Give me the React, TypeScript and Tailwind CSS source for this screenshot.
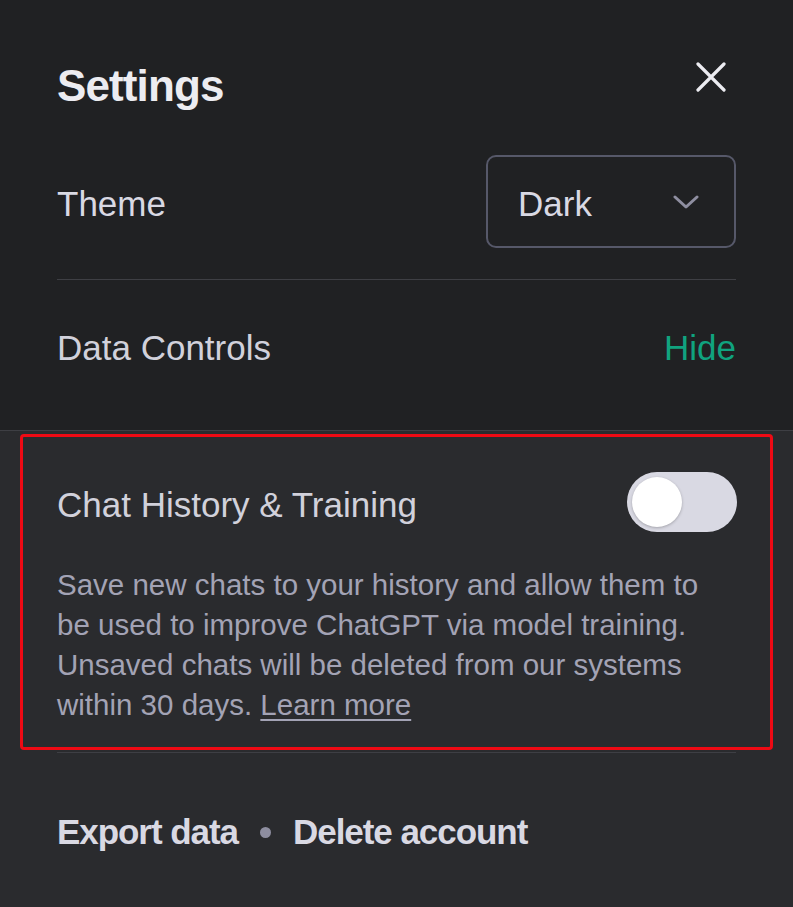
import { useState } from 'react';

const font = { fontFamily: '"Liberation Sans", Arial, sans-serif' };

function CloseIcon() {
  return (
    <svg width="30" height="30" viewBox="0 0 30 30" className="mr-[10px] mt-[2px]">
      <path d="M2 2L28 28M28 2L2 28" stroke="#ececf1" strokeWidth="3.2" strokeLinecap="round" />
    </svg>
  );
}

function Chevron() {
  return (
    <svg width="26" height="16" viewBox="0 0 26 16">
      <path d="M2 3L13 13L24 3" fill="none" stroke="#8e8ea0" strokeWidth="3" strokeLinecap="round" strokeLinejoin="round" />
    </svg>
  );
}

export default function App() {
  const [history, setHistory] = useState(false);

  return (
    <div className="flex min-h-[907px] w-full flex-col bg-[#202123]" style={font}>
      {/* top part */}
      <div className="flex flex-col px-[57px] pt-[60px]">
        <div className="flex h-[52px] items-start justify-between">
          <h1 className="text-[44px] font-bold leading-[52px] tracking-[-0.02em] text-[#ececf1]">Settings</h1>
          <CloseIcon />
        </div>

        <div className="mt-[43px] flex items-center justify-between">
          <span className="mt-[4px] text-[35px] leading-[48px] text-[#d9d9e3]">Theme</span>
          <div className="flex h-[93px] w-[250px] items-center justify-between rounded-[10px] border-2 border-[#565869] pl-[30px] pr-[35px]">
            <span className="mt-[4px] text-[35px] leading-[48px] text-[#d9d9e3]">Dark</span>
            <Chevron />
          </div>
        </div>

        <div className="mt-[31px] h-px bg-[#3e3f44]" />

        <div className="mb-[58px] mt-[44px] flex h-[48px] items-center justify-between">
          <span className="text-[35px] leading-[48px] text-[#d1d1db]">Data Controls</span>
          <span className="text-[35px] leading-[48px] text-[#10a37f]">Hide</span>
        </div>
      </div>

      {/* data controls */}
      <div className="flex flex-1 flex-col border-t border-[#3e3f44] bg-[#2a2b2e]">
        <div className="mx-[20px] mt-[3px] rounded-[4px] border-[3px] border-[#ee0a14] pb-[22px] pl-[34px] pr-[33px] pt-[35px]">
          <div className="flex h-[60px] items-center justify-between">
            <span className="mt-[5px] text-[35px] leading-[48px] text-[#d1d1db]">Chat History &amp; Training</span>
            <button
              onClick={() => setHistory(!history)}
              className={`flex h-[60px] w-[110px] items-center rounded-full bg-[#d9d9e3] px-[5px] ${history ? 'justify-end' : 'justify-start'}`}
            >
              <span className="h-[50px] w-[50px] rounded-full bg-white shadow-[0_1px_3px_rgba(0,0,0,0.25)]" />
            </button>
          </div>
          <p className="mt-[33px] text-[29.5px] leading-[40px] text-[#a3a3b5]">
            Save new chats to your history and allow them to be used to improve ChatGPT via model training.
            Unsaved chats will be deleted from our systems within 30 days.{' '}
            <a className="underline decoration-2 underline-offset-[4px]">Learn more</a>
          </p>
        </div>

        <div className="mx-[57px] mt-[2px] h-px bg-[#3e3f44]" />

        <div className="mt-[55px] flex h-[48px] items-center gap-[22px] px-[57px] text-[35px] font-bold tracking-[-0.03em] text-[#d9d9e3]">
          <span>Export data</span>
          <span className="h-[11px] w-[11px] rounded-full bg-[#8e8ea0]" />
          <span>Delete account</span>
        </div>
      </div>
    </div>
  );
}
